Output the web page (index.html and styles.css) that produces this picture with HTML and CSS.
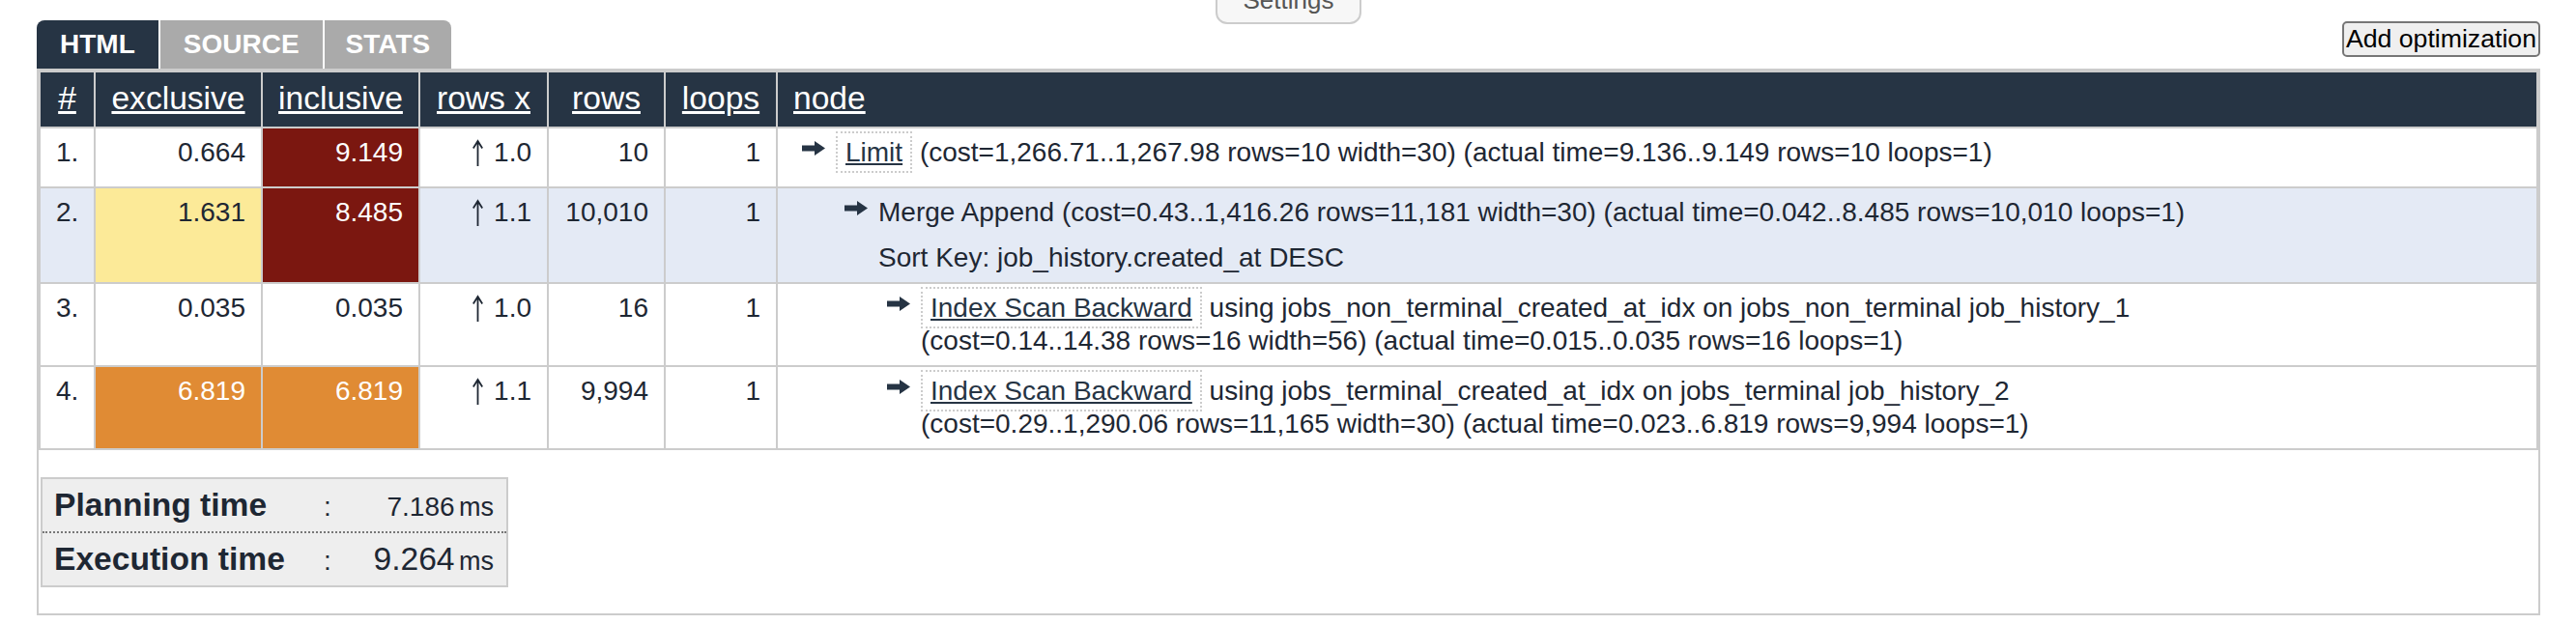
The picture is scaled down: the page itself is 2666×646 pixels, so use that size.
FILE: index.html
```html
<!DOCTYPE html>
<html lang="en">
<head>
<meta charset="utf-8">
<title>explain</title>
<link rel="stylesheet" href="styles.css">
</head>
<body>
<div class="page">
  <div class="toolbar">
    <nav class="tabs">
      <a class="tab active" href="#">HTML</a>
      <a class="tab" href="#">SOURCE</a>
      <a class="tab" href="#">STATS</a>
    </nav>
    <button class="settings" type="button">Settings</button>
    <button class="add-opt" type="button">Add optimization</button>
  </div>

  <div class="panel">
    <table class="plan">
      <colgroup>
        <col class="col-num">
        <col class="col-excl">
        <col class="col-incl">
        <col class="col-rowsx">
        <col class="col-rows">
        <col class="col-loops">
        <col class="col-node">
      </colgroup>
      <thead>
        <tr>
          <th><a href="#">#</a></th>
          <th><a href="#">exclusive</a></th>
          <th><a href="#">inclusive</a></th>
          <th><a href="#">rows x</a></th>
          <th><a href="#">rows</a></th>
          <th><a href="#">loops</a></th>
          <th class="h-node"><a href="#">node</a></th>
        </tr>
      </thead>
      <tbody>
        <tr>
          <td class="num">1.</td>
          <td>0.664</td>
          <td class="c-red">9.149</td>
          <td><svg class="up" viewBox="0 0 13 28" width="13" height="28"><path d="M6.5 2.5V28M1.8 9.5L6.5 2L11.2 9.5"/></svg>1.0</td>
          <td>10</td>
          <td>1</td>
          <td class="node">
            <div class="node-block lvl1">
              <div class="node-title"><svg class="arrow" viewBox="0 0 24 15" width="24" height="15"><path d="M0 4.5H13V0L24 7.5L13 15V10.5H0Z"/></svg><a class="op" href="#">Limit</a> <span class="est">(cost=1,266.71..1,267.98 rows=10 width=30) (actual time=9.136..9.149 rows=10 loops=1)</span></div>
              <div class="node-pad"></div>
            </div>
          </td>
        </tr>
        <tr class="alt">
          <td class="num">2.</td>
          <td class="c-yellow">1.631</td>
          <td class="c-red">8.485</td>
          <td><svg class="up" viewBox="0 0 13 28" width="13" height="28"><path d="M6.5 2.5V28M1.8 9.5L6.5 2L11.2 9.5"/></svg>1.1</td>
          <td>10,010</td>
          <td>1</td>
          <td class="node">
            <div class="node-block lvl2">
              <div class="node-title"><svg class="arrow" viewBox="0 0 24 15" width="24" height="15"><path d="M0 4.5H13V0L24 7.5L13 15V10.5H0Z"/></svg>Merge Append <span class="est">(cost=0.43..1,416.26 rows=11,181 width=30) (actual time=0.042..8.485 rows=10,010 loops=1)</span></div>
              <div class="node-extra">Sort Key: job_history.created_at DESC</div>
            </div>
          </td>
        </tr>
        <tr>
          <td class="num">3.</td>
          <td>0.035</td>
          <td>0.035</td>
          <td><svg class="up" viewBox="0 0 13 28" width="13" height="28"><path d="M6.5 2.5V28M1.8 9.5L6.5 2L11.2 9.5"/></svg>1.0</td>
          <td>16</td>
          <td>1</td>
          <td class="node">
            <div class="node-block lvl3">
              <div class="node-title"><svg class="arrow" viewBox="0 0 24 15" width="24" height="15"><path d="M0 4.5H13V0L24 7.5L13 15V10.5H0Z"/></svg><a class="op" href="#">Index Scan Backward</a> using jobs_non_terminal_created_at_idx on jobs_non_terminal job_history_1 <span class="est">(cost=0.14..14.38 rows=16 width=56) (actual time=0.015..0.035 rows=16 loops=1)</span></div>
            </div>
          </td>
        </tr>
        <tr>
          <td class="num">4.</td>
          <td class="c-orange">6.819</td>
          <td class="c-orange">6.819</td>
          <td><svg class="up" viewBox="0 0 13 28" width="13" height="28"><path d="M6.5 2.5V28M1.8 9.5L6.5 2L11.2 9.5"/></svg>1.1</td>
          <td>9,994</td>
          <td>1</td>
          <td class="node">
            <div class="node-block lvl3">
              <div class="node-title"><svg class="arrow" viewBox="0 0 24 15" width="24" height="15"><path d="M0 4.5H13V0L24 7.5L13 15V10.5H0Z"/></svg><a class="op" href="#">Index Scan Backward</a> using jobs_terminal_created_at_idx on jobs_terminal job_history_2 <span class="est">(cost=0.29..1,290.06 rows=11,165 width=30) (actual time=0.023..6.819 rows=9,994 loops=1)</span></div>
            </div>
          </td>
        </tr>
      </tbody>
    </table>

    <div class="summary">
      <div class="sum-row">
        <span class="sum-label">Planning time</span>
        <span class="sum-colon">:</span>
        <span class="sum-value"><span class="sum-num">7.186</span> <span class="sum-unit">ms</span></span>
      </div>
      <div class="sum-row">
        <span class="sum-label">Execution time</span>
        <span class="sum-colon">:</span>
        <span class="sum-value"><span class="sum-num big">9.264</span> <span class="sum-unit">ms</span></span>
      </div>
    </div>
  </div>
</div>
</body>
</html>
```

FILE: styles.css
```css
* {
  box-sizing: border-box;
}

html,
body {
  margin: 0;
  background: #ffffff;
}

body {
  font-family: "Liberation Sans", Arial, Helvetica, sans-serif;
  color: #1e2733;
}

.page {
  padding: 0 37px 0 38px;
}

/* ---------- toolbar ---------- */
.toolbar {
  display: grid;
  grid-template-columns: 1fr auto 1fr;
  height: 71px;
}

.tabs {
  display: flex;
  gap: 2px;
  align-self: end;
  justify-self: start;
  border-radius: 8px 8px 0 0;
  overflow: hidden;
}

.tab {
  display: block;
  height: 50px;
  line-height: 50px;
  padding: 0 24px;
  background: #aaaaaa;
  color: #ffffff;
  font-size: 28px;
  font-weight: bold;
  text-decoration: none;
}

.tab:last-child {
  padding: 0 22px;
}

.tab.active {
  background: #263444;
}

.settings {
  align-self: start;
  margin-top: -25px;
  height: 50px;
  padding: 8px 27px;
  font: 26px/30px "Liberation Sans", Arial, sans-serif;
  color: #555555;
  background: #f7f7f7;
  border: 2px solid #cccccc;
  border-radius: 12px;
}

.add-opt {
  justify-self: end;
  align-self: start;
  margin-top: 22px;
  height: 37px;
  padding: 1px 2px;
  font: 26.67px/31px "Liberation Sans", Arial, sans-serif;
  color: #000000;
  background: #efefef;
  border: 2px solid #767676;
  border-radius: 5px;
}

/* ---------- panel / table ---------- */
.panel {
  border: 2px solid #cccccc;
  padding-bottom: 27px;
}

.plan {
  width: 100%;
  border-collapse: collapse;
  table-layout: fixed;
}

.col-num { width: 57px; }
.col-excl { width: 173px; }
.col-incl { width: 163px; }
.col-rowsx { width: 133px; }
.col-rows { width: 121px; }
.col-loops { width: 116px; }

.plan th,
.plan td {
  border: 2px solid #cccccc;
}

.plan th {
  background: #263444;
  color: #ffffff;
  font-size: 33.6px;
  font-weight: normal;
  line-height: 38px;
  padding: 8px 16px 10px;
  text-align: center;
}

.plan th a {
  color: #ffffff;
  text-decoration: underline;
}

.plan th.h-node {
  text-align: left;
}

.plan td {
  font-size: 28px;
  line-height: 34px;
  padding: 8px 16px;
  vertical-align: top;
  text-align: right;
  white-space: nowrap;
}

.plan td.num {
  text-align: center;
}

.plan td.node {
  text-align: left;
  white-space: normal;
}

.plan tr.alt td {
  background: #e4eaf5;
}

.plan td.c-yellow,
.plan tr.alt td.c-yellow {
  background: #fcea98;
}

.plan td.c-red,
.plan tr.alt td.c-red {
  background: #7b1710;
  color: #ffffff;
}

.plan td.c-orange {
  background: #e08b34;
  color: #ffffff;
}

.up {
  display: inline-block;
  width: 13px;
  height: 28px;
  margin-right: 10px;
  vertical-align: -5px;
  fill: none;
  stroke: #1e2733;
  stroke-width: 1.8;
  stroke-linecap: butt;
  stroke-linejoin: miter;
}

/* ---------- node column ---------- */
.lvl1 { margin-left: 44px; }
.lvl2 { margin-left: 88px; }
.lvl3 { margin-left: 132px; }

.node-title {
  text-indent: -35px;
}

.est {
  white-space: nowrap;
}

.arrow {
  display: inline-block;
  width: 24px;
  height: 15px;
  margin-right: 11px;
  vertical-align: 6px;
  fill: #263444;
}

.op {
  color: #263444;
  text-decoration: underline;
  border: 2px dotted #cccccc;
  padding: 4px 8px;
}

.node-extra {
  margin-top: 13px;
}

.node-pad {
  height: 10px;
}

/* ---------- summary ---------- */
.summary {
  width: 484px;
  margin: 28px 0 0 2px;
  background: #eeeeee;
  border: 2px solid #cccccc;
}

.sum-row {
  display: flex;
  align-items: baseline;
  height: 54px;
  line-height: 54px;
  padding: 0 13px 0 12px;
}

.sum-row + .sum-row {
  height: 56px;
  border-top: 2px dotted #777777;
}

.sum-label {
  flex: 0 0 279px;
  font-size: 33.6px;
  font-weight: bold;
}

.sum-colon {
  font-size: 28px;
}

.sum-value {
  flex: 1;
  text-align: right;
}

.sum-num {
  font-size: 28px;
}

.sum-num.big {
  font-size: 33.6px;
}

.sum-unit {
  font-size: 27px;
}
```
